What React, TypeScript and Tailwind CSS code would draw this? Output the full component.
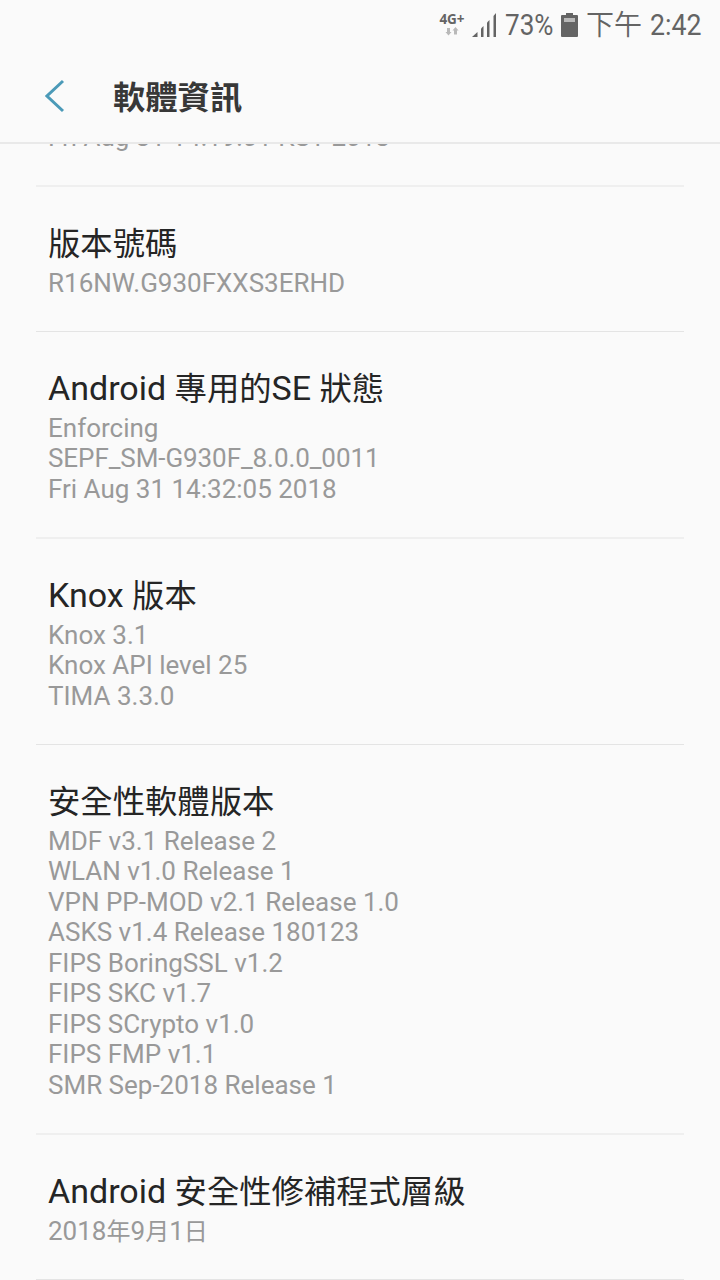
import React from 'react';

const entries = [
  { title: '核心版本', lines: ['Fri Aug 31 14:19:01 KST 2018'], divider: 'pb-[32px] border-b-2 border-[#efefef]' },
  { title: '版本號碼', lines: ['R16NW.G930FXXS3ERHD'], divider: 'pb-[32.5px] border-b border-[#e4e4e4]' },
  {
    title: 'Android 專用的SE 狀態',
    lines: ['Enforcing', 'SEPF_SM-G930F_8.0.0_0011', 'Fri Aug 31 14:32:05 2018'],
    divider: 'pb-[32.5px] border-b-2 border-[#efefef]',
  },
  {
    title: 'Knox 版本',
    lines: ['Knox 3.1', 'Knox API level 25', 'TIMA 3.3.0'],
    divider: 'pb-[32.5px] border-b border-[#e4e4e4]',
  },
  {
    title: '安全性軟體版本',
    lines: [
      'MDF v3.1 Release 2',
      'WLAN v1.0 Release 1',
      'VPN PP-MOD v2.1 Release 1.0',
      'ASKS v1.4 Release 180123',
      'FIPS BoringSSL v1.2',
      'FIPS SKC v1.7',
      'FIPS SCrypto v1.0',
      'FIPS FMP v1.1',
      'SMR Sep-2018 Release 1',
    ],
    divider: 'pb-[32.5px] border-b-2 border-[#efefef]',
  },
  { title: 'Android 安全性修補程式層級', lines: ['2018年9月1日'], divider: 'pb-[32.5px] border-b border-[#e4e4e4]' },
];

// Han characters run slightly smaller than the Latin text beside them
const MixedText = ({ text, hanClass }: { text: string; hanClass: string }) => (
  <>
    {text.split(/([\u4e00-\u9fff]+)/).map((part, index) =>
      index % 2 === 1 ? (
        <span key={index} className={hanClass}>{part}</span>
      ) : (
        part
      )
    )}
  </>
);

const StatusBar = () => (
  <div className="flex h-[50px] shrink-0 items-center justify-end pr-[18px] text-[30px] leading-[50px] text-[#646464]">
    <div className="mr-[7px] flex h-[50px] w-[26px] flex-col items-center pt-[12px]">
      <span className="font-['Open_Sans'] text-[13.5px] font-bold leading-[14px]">4G+</span>
      <svg width="14" height="9" viewBox="0 0 14 9" className="mt-[1px] fill-[#b9b9b9]">
        <path d="M2 1h3v4h1.500L3.500 8.500 0.500 5h1.500z" />
        <path d="M9 7.500h3v-4h1.500L10.500 0 7.500 3.500h1.500z" />
      </svg>
    </div>
    <svg width="25" height="24" viewBox="0 0 25 24" className="mr-[8px] fill-[#646464]">
      <path d="M0 24L5.500 19V24z" />
      <path d="M9 15.500L11.500 13V24H9z" />
      <path d="M15 9.500L17.500 7V24H15z" />
      <path d="M21.500 3L24 0V24h-2.500z" />
    </svg>
    <div className="w-[49px]">
      <span className="inline-block origin-left scale-x-[0.87]">73%</span>
    </div>
    <svg width="17" height="24" viewBox="0 0 17 24" className="ml-[7px] mr-[8px]">
      <path d="M5 0h7v2h4q1 0 1 1v20q0 1-1 1H1q-1 0-1-1V3q0-1 1-1h4z" fill="#646464" />
      <path d="M3 5h11v4H3z" fill="#b9b9b9" />
    </svg>
    <span className="pt-[2px] text-[28px] font-[350]">下午</span>
    <div className="ml-[8px] w-[52px]">
      <span className="inline-block origin-left scale-x-[0.89]">2:42</span>
    </div>
  </div>
);

const Header = () => (
  <header className="z-10 flex h-[94px] shrink-0 items-center border-b-2 border-[#e9e9e9] bg-[#fafafa] pl-[45px]">
    <svg width="20" height="34" viewBox="0 0 20 34" fill="none" className="stroke-[#4b9ab8]">
      <path d="M18 2L2 17l16 15" strokeWidth="3" />
    </svg>
    <h1 className="ml-[48px] pt-[3px] text-[32.3px] font-bold leading-[48px] text-[#383838]">軟體資訊</h1>
  </header>
);

const App = () => {
  return (
    <div className="flex h-[1280px] w-[720px] flex-col overflow-hidden bg-[#fafafa] font-[Roboto,'Noto_Sans_CJK_TC',sans-serif]">
      <StatusBar />
      <Header />
      <main className="flex min-h-0 flex-1 flex-col overflow-hidden">
        <div className="-mt-[103px]">
          {entries.map((entry) => (
            <section key={entry.title} className={`mx-9 px-3 pt-[36px] ${entry.divider}`}>
              <h2 className="h-[45px] text-[34px] leading-[40px] text-[#252525]">
                <MixedText text={entry.title} hanClass="text-[0.951em]" />
              </h2>
              {entry.lines.map((line) => (
                <p
                  key={line}
                  className={`h-[30.5px] text-[26px] leading-[30.5px] text-[#999999] ${line.includes('_') ? 'tracking-[-0.08px]' : ''}`}
                >
                  <MixedText text={line} hanClass="text-[0.925em]" />
                </p>
              ))}
            </section>
          ))}
        </div>
      </main>
    </div>
  );
};

export default App;
